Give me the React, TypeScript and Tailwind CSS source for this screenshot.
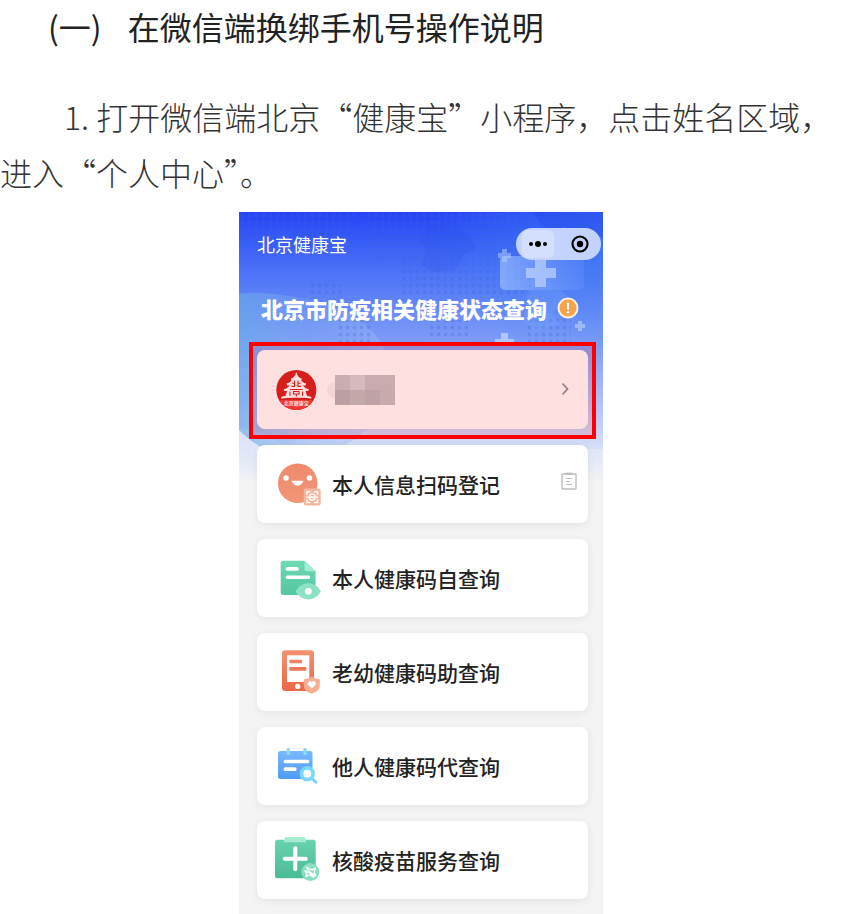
import type { ReactNode } from "react";

function LogoIcon() {
  return (
    <svg viewBox="0 0 48 48" className="size-12">
      <circle cx="23.3" cy="24" r="20" fill="#d0231f" />
      <path d="M6 34a20 20 0 0 0 34.600 0z" fill="#ea4038" />
      <g fill="#fff">
        <path d="M23.3 6l1.200 3.500h-2.400z" />
        <path d="M22 9h2.600c.6 1.900 2 3 4.200 3.600l-.6 1.600H18.400l-.6-1.600C20 12 21.400 10.900 22 9z" />
        <path d="M18.500 14h9.600c.9 1.700 2.500 2.900 5 3.400l-.6 2H14.100l-.6-2c2.500-.5 4.100-1.700 5-3.400z" />
        <path d="M16.500 19.400h13.600c1 1.900 2.800 3.200 5.800 3.700l-.7 2H11.400l-.7-2c3-.5 4.800-1.800 5.800-3.700z" />
        <path d="M14 25h18.600l1.400 5H12.600z" />
        <path d="M8.300 31c4.500-2.300 25.500-2.300 30 0v1.600c-5-1.300-25-1.300-30 0z" />
      </g>
      <g stroke="#d0231f" strokeWidth="1.100" fill="none">
        <path d="M21.600 14.500v6.500M25 14.500v6.500M19 17.300h2.600M25 17.300h2.600M18.600 20.500h3M25 20.500h3M17 23.500h12.600M20.500 25.500h5.600v2.500h-5.600zM23.300 28v2.500M17 25.500v4.500M29.600 25.500v4.500" />
      </g>
      <text x="23.300" y="38.600" textAnchor="middle" fontSize="5" fontWeight="700" fill="#fff">
        北京健康宝
      </text>
    </svg>
  );
}

function ScanIcon() {
  return (
    <svg viewBox="0 0 48 48" className="size-12">
      <defs>
        <linearGradient id="scan" x1="0" y1="0" x2="0" y2="1">
          <stop offset="0" stopColor="#ee8b6c" />
          <stop offset="1" stopColor="#f39578" />
        </linearGradient>
      </defs>
      <circle cx="24.700" cy="23.300" r="19.800" fill="url(#scan)" />
      <circle cx="13" cy="18" r="2.800" fill="#fff" />
      <circle cx="36.500" cy="18" r="2.800" fill="#fff" />
      <path d="M18.700 20.800h11.600c-.6 3-2.800 4.900-5.800 4.900s-5.200-1.900-5.800-4.900z" fill="#fff" />
      <rect x="30.700" y="28.500" width="17" height="17" rx="2.500" fill="#f7b69e" />
      <path
        d="M34 34.800v-3h3.300M41.300 31.800h3.300v3M44.600 39.400v3h-3.300M37.300 42.400H34v-3"
        fill="none"
        stroke="#fff"
        strokeWidth="1.500"
      />
      <circle cx="39.300" cy="37.100" r="3" fill="none" stroke="#fff" strokeWidth="1.200" />
      <path d="M33.500 37.100h11.600" stroke="#fff" strokeWidth="1.400" />
    </svg>
  );
}

function SelfCheckIcon() {
  return (
    <svg viewBox="0 0 48 48" className="size-12">
      <defs>
        <linearGradient id="doc" x1="0" y1="0" x2="0" y2="1">
          <stop offset="0" stopColor="#6edbb4" />
          <stop offset="1" stopColor="#54c6a0" />
        </linearGradient>
      </defs>
      <path
        d="M10.200 6.700h21.300l11 10.600v21.200a2.500 2.500 0 0 1-2.500 2.500H10.200a2.500 2.500 0 0 1-2.500-2.500V9.200a2.500 2.500 0 0 1 2.500-2.500z"
        fill="url(#doc)"
      />
      <path d="M31.500 6.700l11 10.600h-9a2 2 0 0 1-2-2z" fill="#a5ecd1" />
      <rect x="12.700" y="13" width="13" height="3.700" rx="1.500" fill="#fff" />
      <rect x="12.700" y="21.400" width="24.300" height="3.700" rx="1.500" fill="#fff" />
      <path d="M22.500 37.300c3.200-5.400 7.600-8.100 12.800-8.100s9.600 2.700 12.500 8.100c-2.900 5.400-7.300 8.100-12.500 8.100s-9.600-2.700-12.800-8.100z" fill="#8ce2c2" />
      <circle cx="35.300" cy="37.300" r="3.400" fill="#fff" />
    </svg>
  );
}

function FamilyIcon() {
  return (
    <svg viewBox="0 0 48 48" className="size-12">
      <defs>
        <linearGradient id="pad" x1="0" y1="0" x2="0" y2="1">
          <stop offset="0" stopColor="#f29274" />
          <stop offset="1" stopColor="#ea6746" />
        </linearGradient>
      </defs>
      <rect x="9" y="2.300" width="32" height="40.700" rx="3" fill="url(#pad)" />
      <rect x="14" y="7.300" width="22.300" height="26.700" fill="#fff" />
      <rect x="16.300" y="11.700" width="12.700" height="3.600" rx=".8" fill="#ee8466" />
      <rect x="16.300" y="19" width="17" height="3.700" rx=".8" fill="#ec7858" />
      <circle cx="24.700" cy="38.400" r="2.700" fill="#fff" />
      <path d="M38.800 28.500c2.400 1.800 5 2.500 8 2.700v6.300c0 3.900-3 6.600-8 8.300-5-1.700-8-4.400-8-8.300v-6.300c3-.2 5.600-.9 8-2.700z" fill="#f6ae90" />
      <path d="M38.800 40.600l-3.600-3.500a2.400 2.400 0 0 1 3.600-3.200 2.400 2.400 0 0 1 3.600 3.200z" fill="#fff" />
    </svg>
  );
}

function ProxyIcon() {
  return (
    <svg viewBox="0 0 48 48" className="size-12">
      <defs>
        <linearGradient id="cal" x1="0" y1="0" x2="0" y2="1">
          <stop offset="0" stopColor="#7ab8fb" />
          <stop offset="1" stopColor="#4e9bf6" />
        </linearGradient>
      </defs>
      <rect x="5" y="9" width="34.500" height="28" rx="2.500" fill="url(#cal)" />
      <path d="M15.300 7.500v4M32 7.500v4" stroke="#8bdcf8" strokeWidth="3.400" strokeLinecap="round" />
      <rect x="10.700" y="17.700" width="25.600" height="3.600" rx="1.500" fill="#fff" />
      <rect x="10.700" y="25.300" width="12.800" height="3.600" rx="1.500" fill="#fff" />
      <path d="M39.500 37l3.300 3.200" stroke="#70d3f7" strokeWidth="2.800" strokeLinecap="round" />
      <circle cx="34.300" cy="31.700" r="5.800" fill="#fff" stroke="#79d8f8" strokeWidth="3.800" />
    </svg>
  );
}

function VaccineIcon() {
  return (
    <svg viewBox="0 0 48 48" className="size-12">
      <defs>
        <linearGradient id="clip" x1="0" y1="0" x2="0" y2="1">
          <stop offset="0" stopColor="#69d2ae" />
          <stop offset="1" stopColor="#4bbb97" />
        </linearGradient>
      </defs>
      <rect x="2" y="3.800" width="40.700" height="38.500" rx="2.500" fill="url(#clip)" />
      <path d="M13.500 1h17a2 2 0 0 1 2 1.700l.7 3.600H10.900l.7-3.600a2 2 0 0 1 1.900-1.700z" fill="#a5ebd0" />
      <path d="M22.300 12.300v21M11.800 22.800h21" stroke="#fff" strokeWidth="4" strokeLinecap="round" />
      <circle cx="37.300" cy="36" r="9" fill="#87dfbf" />
      <path
        d="M33.500 30.500c0 5 7.500 6 7.500 11M31.500 35c4-.5 6 5.500 11.500 4.500M33.500 31l5.500 3 3.500-2-1.500 5 2 2.500M31.500 35l2.500 2-1 3.500 4-1.500 4 2.500"
        fill="none"
        stroke="#fff"
        strokeWidth="1.300"
        strokeLinejoin="round"
      />
    </svg>
  );
}

// soft map shapes, dot grids and crosses behind the header
function HeaderArt() {
  return (
    <svg viewBox="0 0 364 270" className="absolute inset-x-0 top-0 w-full" aria-hidden="true">
      <defs>
        <pattern id="dots" width="7" height="7" patternUnits="userSpaceOnUse">
          <circle cx="3.500" cy="3.500" r="1.900" fill="#3c63d8" fillOpacity=".28" />
        </pattern>
        <linearGradient id="wave" x1="0" y1="0" x2="1" y2="0">
          <stop offset="0" stopColor="#6aaae8" stopOpacity=".65" />
          <stop offset=".5" stopColor="#7fa9f2" stopOpacity=".3" />
          <stop offset="1" stopColor="#a9c4fa" stopOpacity=".35" />
        </linearGradient>
        <radialGradient id="side" cx=".85" cy=".35" r=".6">
          <stop offset="0" stopColor="#3f86f5" stopOpacity=".55" />
          <stop offset="1" stopColor="#3f86f5" stopOpacity="0" />
        </radialGradient>
        <linearGradient id="kit" x1="0" y1="0" x2="1" y2="0">
          <stop offset="0" stopColor="#a9cbff" stopOpacity=".6" />
          <stop offset="1" stopColor="#8fb0ff" stopOpacity=".15" />
        </linearGradient>
        <linearGradient id="haze" x1="0" y1="0" x2="0" y2="1">
          <stop offset="0" stopColor="#fff" stopOpacity=".4" />
          <stop offset="1" stopColor="#fff" stopOpacity="0" />
        </linearGradient>
      </defs>
      <ellipse cx="270" cy="60" rx="160" ry="110" fill="url(#side)" />
      <path d="M0 215c18 5 36 12 50 22h314v33H0z" fill="url(#haze)" />
      <path d="M0 82c12-2 36-1 62 4 50 10 84 32 88 70 2 50-38 89-90 89-22 0-42-9-60-27z" fill="url(#wave)" />
      <path d="M0 0h118l-8 14 12 10-10 10-30-6-14 10-28-8-22 4-18-8z" fill="url(#dots)" />
      <path d="M128 0h166v84H162V50h-24z" fill="url(#dots)" />
      <path d="M190 14l26-6 12 14 10 14-14 8-8 14-20 2-14-6 6-16-8-10z" fill="#2448e4" fillOpacity=".16" />
      <path d="M294 0h70v26l-16-10-12 6-10-8-14 6-12-10z" fill="#1f3ee0" fillOpacity=".28" />
      <path d="M68 68h34v18H68zM98 108h36v26H98zM189 108h40v20h-40zM289 106h43v26h-43z" fill="url(#dots)" />
      <rect x="261" y="44" width="84" height="34" rx="5" fill="url(#kit)" />
      <path d="M289 78h32l12 10-20 12 8 12-24 8-12-10z" fill="#7fb0ff" fillOpacity=".22" />
      <path d="M296 47h11v9h10v10h-10v9h-11v-9h-9V56h9z" fill="#d8e6ff" fillOpacity=".55" />
      <path d="M263 37h5v4h4v5h-4v4h-5v-4h-4v-5h4z" fill="#b7ceff" fillOpacity=".5" />
      <path d="M262 121h7v6h6v7h-19v-7h6z" fill="#d6e2ff" fillOpacity=".6" />
      <path d="M339 109h4v3h3v4h-3v3h-4v-3h-3v-4h3z" fill="#c2d2ff" fillOpacity=".6" />
    </svg>
  );
}

const services: { label: string; icon: ReactNode; record?: boolean }[] = [
  { label: "本人信息扫码登记", icon: <ScanIcon />, record: true },
  { label: "本人健康码自查询", icon: <SelfCheckIcon /> },
  { label: "老幼健康码助查询", icon: <FamilyIcon /> },
  { label: "他人健康码代查询", icon: <ProxyIcon /> },
  { label: "核酸疫苗服务查询", icon: <VaccineIcon /> },
];

function Phone() {
  return (
    <section className="relative w-[364px] max-w-full overflow-hidden bg-[#f3f3f3] pb-4">
      <div className="absolute inset-x-0 top-0 h-[270px] bg-linear-to-b from-[#2743f5] via-[#839ff6] via-50% to-[#f3f3f3]" />
      <HeaderArt />

      <div className="relative">
        <header className="flex items-center justify-between pt-4 pr-0.5 pl-[18px]">
          <span className="text-lg leading-8 text-white">北京健康宝</span>
          <div className="flex h-8 w-[85px] items-center justify-between rounded-full bg-[#c3d3fd] pr-3 pl-1.5">
            <button aria-label="更多" className="flex h-7 w-8 items-center justify-center gap-0.5 rounded-md bg-[#d3dffd]">
              <i className="size-1 rounded-full bg-black" />
              <i className="size-[6px] rounded-full bg-black" />
              <i className="size-1 rounded-full bg-black" />
            </button>
            <button aria-label="关闭">
              <svg viewBox="0 0 18 18" className="size-[18px]">
                <circle cx="9" cy="9" r="7.500" fill="none" stroke="#000" strokeWidth="2.200" />
                <circle cx="9" cy="9" r="3.200" fill="#000" />
              </svg>
            </button>
          </div>
        </header>

        <div className="mt-8 flex items-center gap-2.5 pl-[22px]">
          <h2 className="text-[22px] leading-8 font-black whitespace-nowrap text-white">
            北京市防疫相关健康状态查询
          </h2>
          <button aria-label="说明">
            <svg viewBox="0 0 22 22" className="size-[22px]">
              <circle cx="11" cy="11" r="9.500" fill="#f5a44c" stroke="#ffeedd" strokeWidth="2" />
              <path d="M11 6.500v5.500" stroke="#fff" strokeWidth="2" strokeLinecap="round" />
              <circle cx="11" cy="15.300" r="1.200" fill="#fff" />
            </svg>
          </button>
        </div>

        <div className="flex flex-col gap-4 pt-[26px] pr-[15px] pl-[18px]">
          <div className="relative">
            <button className="flex h-[79px] w-full items-center rounded-lg bg-white pr-[11px] pl-4">
              <LogoIcon />
              {/* masked name */}
              <span className="ml-1.5 h-4 w-2 rounded-l-full bg-[#f3f4f5]" />
              <span className="grid grid-cols-4">
                <i className="size-[15px] bg-[#c2c5c8]" />
                <i className="size-[15px] bg-[#ced3d7]" />
                <i className="size-[15px] bg-[#c1c2c6]" />
                <i className="size-[15px] bg-[#c1c2c6]" />
                <i className="size-[15px] bg-[#b3b5b9]" />
                <i className="size-[15px] bg-[#bbbfc2]" />
                <i className="size-[15px] bg-[#b6b8bc]" />
                <i className="size-[15px] bg-[#c0c2c6]" />
              </span>
              <svg viewBox="0 0 24 24" className="ml-auto size-6" fill="none" stroke="#8c9096" strokeWidth="1.800">
                <path d="M9.500 5.500l5 5.500-5 5.500" />
              </svg>
            </button>
            <div className="pointer-events-none absolute -inset-x-2 -top-2 -bottom-2.5 border-4 border-[#fb0000] bg-[#ff0000]/12" />
          </div>

          {services.map((s) => (
            <button
              key={s.label}
              className="flex h-[78px] w-full items-center rounded-lg bg-white pr-[11px] pl-4 shadow-[0_2px_8px_rgba(0,0,0,0.06)]"
            >
              {s.icon}
              <span className="ml-[11px] text-[21px] leading-8 font-medium text-[#222]">{s.label}</span>
              {s.record && (
                <svg viewBox="0 0 16 18" className="mb-1.5 ml-auto h-[18px] w-4" fill="none" stroke="#bdbdbd" strokeWidth="1.400">
                  <rect x="1" y="2" width="14" height="15" rx=".5" />
                  <path d="M4.500 1.700h7" strokeWidth="2.200" />
                  <path d="M5 6.500h6M5 9.500h4M5 12.500h6" strokeWidth="1.200" />
                </svg>
              )}
            </button>
          ))}
        </div>
      </div>
    </section>
  );
}

export default function App() {
  return (
    <main lang="zh-CN" className="bg-white font-['Noto_Sans_CJK_SC',sans-serif]">
      <h1 className="flex gap-[26px] pl-12 text-[32px] leading-[52px] font-normal text-[#222]">
        <span>(一)</span>
        <span>在微信端换绑手机号操作说明</span>
      </h1>
      <p className="mt-9 indent-16 text-[32px] leading-[56px] font-light text-[#333]">
        1. 打开微信端北京“健康宝”小程序，点击姓名区域，进入“个人中心”。
      </p>
      <div className="mt-3 flex justify-center pr-1.5">
        <Phone />
      </div>
    </main>
  );
}
